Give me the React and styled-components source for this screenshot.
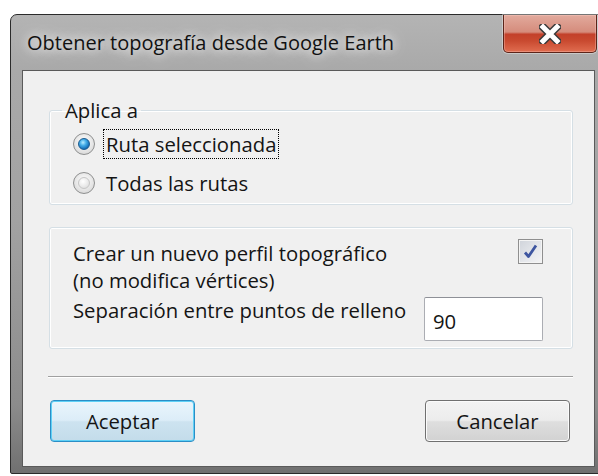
import styled, { createGlobalStyle } from 'styled-components';

const GlobalStyle = createGlobalStyle`
  html, body {
    margin: 0;
    padding: 0;
    background: #ffffff;
    overflow: hidden;
  }
  body {
    font-family: "Open Sans", "Liberation Sans", sans-serif;
  }
`;

const Page = styled.div`
  width: 598px;
  height: 476px;
  padding: 14px 0 0 10px;
  box-sizing: border-box;
  overflow: hidden;
`;

const Window = styled.div`
  width: 597px;
  box-sizing: border-box;
  border: 1px solid #2b2b2b;
  border-radius: 7px 7px 2px 2px;
  padding: 0 11px 6px;
  background: linear-gradient(
    to bottom,
    #b4b4b4 0%,
    #a9a9a9 12%,
    #a2a2a2 45%,
    #8c8c8c 85%,
    #707070 100%
  );
`;

const TitleBar = styled.div`
  display: flex;
  justify-content: space-between;
  align-items: flex-start;
  height: 55px;
  margin: 0 -11px;
  padding: 0 9px 0 16px;
`;

const Title = styled.div`
  align-self: center;
  font-size: 20px;
  line-height: 27px;
  color: #111111;
  text-shadow: 0 0 10px rgba(255, 255, 255, 0.95), 0 0 18px rgba(255, 255, 255, 0.85);
  white-space: nowrap;
`;

const CloseButton = styled.div`
  display: flex;
  align-items: center;
  justify-content: center;
  width: 94px;
  height: 38px;
  box-sizing: border-box;
  border: 1px solid #5c2419;
  border-top: none;
  border-radius: 0 0 5px 5px;
  box-shadow: 0 0 0 1px rgba(255, 255, 255, 0.35), inset 0 0 0 1px rgba(255, 210, 200, 0.35);
  background: linear-gradient(
    to bottom,
    #e2aa9d 0%,
    #d58c7c 46%,
    #c3402a 52%,
    #c94a30 70%,
    #e06d50 100%
  );
`;

const Client = styled.div`
  display: flex;
  flex-direction: column;
  border: 1px solid #5a5a5a;
  background: #f0f0f0;
  padding: 28px 21px 24px 26px;
  color: #141414;
  font-size: 20.3px;
`;

const Group = styled.fieldset`
  margin: ${(p) => p.$gap}px 0 0;
  padding: ${(p) => p.$pad};
  min-width: 0;
  border: 1px solid #d5dfe5;
  border-radius: 3px;
  box-shadow: inset 0 0 0 1px #ffffff;
`;

const Legend = styled.legend`
  margin-left: -11px;
  padding: 0 3px;
  line-height: 22px;
`;

const RadioList = styled.div`
  display: flex;
  flex-direction: column;
  gap: 9px;
`;

const RadioRow = styled.label`
  display: flex;
  align-items: center;
  gap: 8px;
  height: 30px;
`;

const Radio = styled.span`
  position: relative;
  flex: none;
  width: 22px;
  height: 22px;
  box-sizing: border-box;
  border-radius: 50%;
  border: 1px solid #8e8f8f;
  background: radial-gradient(circle at 50% 40%, #ffffff 0%, #e6e6e6 55%, #cfcfcf 100%);

  &::after {
    content: "";
    position: absolute;
    inset: 4px;
    border-radius: 50%;
    border: 1px solid ${(p) => (p.$checked ? '#1a5b8f' : '#c6c6c6')};
    background: ${(p) =>
      p.$checked
        ? 'radial-gradient(circle at 40% 35%, #b8ecff 0%, #45aee8 35%, #1772bb 70%, #0d4f8a 100%)'
        : 'radial-gradient(circle at 40% 35%, #ffffff 0%, #ececec 50%, #d6d6d6 100%)'};
  }
`;

const RadioText = styled.span`
  padding: 0 2px;
  line-height: 28px;
  border: 1px dotted ${(p) => (p.$focused ? '#000000' : 'transparent')};
`;

const OptionsGrid = styled.div`
  display: grid;
  grid-template-columns: 1fr auto;
  row-gap: 3px;
  line-height: 27px;
`;

const CheckBox = styled.span`
  justify-self: end;
  display: flex;
  align-items: center;
  justify-content: center;
  width: 25px;
  height: 25px;
  margin-top: -1px;
  box-sizing: border-box;
  border: 1px solid #8f8f8f;
  box-shadow: inset 0 0 0 1px #f4f4f4;
  background: linear-gradient(135deg, #cfd3da 0%, #e6e8ec 60%, #f4f4f4 100%);
`;

const TextBox = styled.div`
  width: 119px;
  height: 44px;
  box-sizing: border-box;
  padding: 0 8px;
  border: 1px solid #abadb3;
  border-top-color: #8e9097;
  border-radius: 2px;
  background: #ffffff;
  line-height: 46px;
`;

const Separator = styled.div`
  margin: 27px 0 0 -1px;
  height: 0;
  border-top: 1px solid #a0a0a0;
  border-bottom: 1px solid #ffffff;
`;

const ButtonRow = styled.div`
  display: flex;
  justify-content: space-between;
  margin-top: 22px;
  padding: 0 3px 0 1px;
`;

const Button = styled.div`
  display: flex;
  align-items: center;
  justify-content: center;
  width: 145px;
  height: 42px;
  box-sizing: border-box;
  border-radius: 4px;
  border: 1px solid ${(p) => (p.$default ? '#2b8ec6' : '#707070')};
  box-shadow: inset 0 0 0 1px ${(p) => (p.$default ? '#5fd0f6' : '#fbfbfb')};
  background: ${(p) =>
    p.$default
      ? 'linear-gradient(to bottom, #eaf5fc 0%, #dcedf8 48%, #cde3f0 52%, #c3dcea 100%)'
      : 'linear-gradient(to bottom, #f3f3f3 0%, #ececec 48%, #dedede 52%, #d2d2d2 100%)'};
  color: #141414;
`;

const CloseGlyph = () => (
  <svg width="22" height="20" viewBox="0 0 22 20">
    <path d="M4 3 L18 17 M18 3 L4 17" stroke="#3b3b3b" strokeWidth="8" strokeLinecap="square" fill="none" />
    <path d="M4 3 L18 17 M18 3 L4 17" stroke="#ffffff" strokeWidth="5" strokeLinecap="square" fill="none" />
  </svg>
);

const CheckMark = () => (
  <svg width="17" height="17" viewBox="0 0 17 17">
    <path d="M3 9.5 L6.5 13.5 L14 2.5" stroke="#3d55a0" strokeWidth="2.8" fill="none" strokeLinejoin="round" />
  </svg>
);

const App = () => (
  <Page>
    <GlobalStyle />
    <Window>
      <TitleBar>
        <Title>Obtener topografía desde Google Earth</Title>
        <CloseButton>
          <CloseGlyph />
        </CloseButton>
      </TitleBar>
      <Client>
        <Group $gap={0} $pad="8px 0 6px 23px">
          <Legend>Aplica a</Legend>
          <RadioList>
            <RadioRow>
              <Radio $checked />
              <RadioText $focused>Ruta seleccionada</RadioText>
            </RadioRow>
            <RadioRow>
              <Radio />
              <RadioText>Todas las rutas</RadioText>
            </RadioRow>
          </RadioList>
        </Group>

        <Group $gap={22} $pad="12px 29px 7px 23px">
          <OptionsGrid>
            <div>
              Crear un nuevo perfil topográfico
              <br />
              (no modifica vértices)
            </div>
            <CheckBox>
              <CheckMark />
            </CheckBox>
            <div>Separación entre puntos de relleno</div>
            <TextBox>90</TextBox>
          </OptionsGrid>
        </Group>

        <Separator />

        <ButtonRow>
          <Button $default>Aceptar</Button>
          <Button>Cancelar</Button>
        </ButtonRow>
      </Client>
    </Window>
  </Page>
);

export default App;
